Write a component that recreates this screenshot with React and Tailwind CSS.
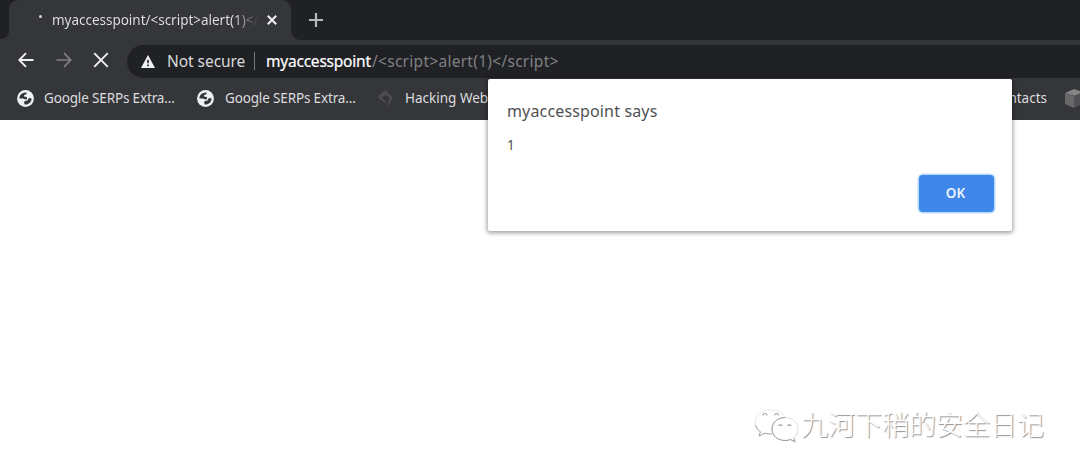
import React from "react";

function GlobeIcon() {
  return (
    <svg className="h-[17px] w-[17px] shrink-0" viewBox="0 0 17 17">
      <circle cx="8.5" cy="8.5" r="8.4" fill="#eef0f1" />
      <path
        d="M9.4 2.4C7 2.200 4.400 3.400 3.100 5.500c-.6.900-.8 2-.7 3h3.300c1.200 0 1.800 1 2.900 1 1 0 1.500-.7 1.500-1.500 0-1-1-1.200-2.200-1.200-1.100 0-1.200-1.400-.3-2 .9-.5 1.500-.2 1.900-.9.300-.5.200-1-.1-1.500Z"
        fill="#35363a"
      />
      <path
        d="M14.600 8.400c-.9.100-1.500-.5-2.300-.3-1.200.3-.9 1.700-1.900 2.300-.9.500-2.100.1-2.800.9-.8.900-.4 1.700.1 3.100 3.700.5 6.900-2.400 6.900-6Z"
        fill="#35363a"
      />
    </svg>
  );
}

function Tab() {
  return (
    <div className="h-10 w-[282px] shrink-0 bg-[#202124]">
      <div className="flex h-10 items-center rounded-t-[9px] bg-[#35363a] pl-[30px]">
        <span className="mb-[8px] h-[3px] w-[3px] rounded-full bg-[#d5d6d8]" />
        <span className="ml-[9px] w-[208px] bg-linear-to-r from-[#e2e3e5] from-88% to-[#35363a] bg-clip-text pl-px text-[13.5px] leading-5 tracking-[-0.02px] whitespace-nowrap text-transparent">
          myaccesspoint/&lt;script&gt;alert(1)&lt;/
        </span>
        <svg className="ml-[8px] h-[10px] w-[10px]" viewBox="0 0 10 10">
          <path d="M.8.800 9.200 9.200M9.200.8.800 9.200" stroke="#f1f2f3" strokeWidth="2" />
        </svg>
      </div>
    </div>
  );
}

function TabStrip() {
  return (
    <div className="flex h-10">
      <div className="h-[39px] w-[9px] shrink-0 rounded-br-[8px] bg-[#202124]" />
      <Tab />
      <div className="flex h-10 flex-1 items-center rounded-bl-[9px] bg-[#202124] pl-[18px]">
        <svg className="h-[14px] w-[14px]" viewBox="0 0 14 14">
          <path d="M7 0v14M0 7h14" stroke="#b9babc" strokeWidth="2.2" />
        </svg>
      </div>
    </div>
  );
}

function Toolbar() {
  return (
    <div className="flex h-10 items-center overflow-hidden pl-[18px]">
      <svg className="h-4 w-4 shrink-0" viewBox="0 0 16 16">
        <path d="M15.500 8H1.500M8 1.200 1.300 8 8 14.800" fill="none" stroke="#eff0f1" strokeWidth="1.900" />
      </svg>
      <svg className="ml-[22px] h-4 w-4 shrink-0" viewBox="0 0 16 16">
        <path d="M.5 8h14M8 1.200 14.700 8 8 14.800" fill="none" stroke="#808184" strokeWidth="1.700" />
      </svg>
      <svg className="ml-[21px] h-4 w-4 shrink-0" viewBox="0 0 16 16">
        <path d="m1.200 1.200 13.600 13.600M14.800 1.200 1.200 14.800" stroke="#eff0f1" strokeWidth="1.900" />
      </svg>
      <div className="mt-[2px] ml-[18px] flex h-[33px] w-[1100px] shrink-0 items-center rounded-full bg-[#202124] pl-[14px] text-[15.5px] leading-6 whitespace-nowrap">
        <svg className="h-[13px] w-[14px] shrink-0" viewBox="0 0 14 13">
          <path d="M7 0 14 13H0Z" fill="#eff0f1" />
          <path d="M6.200 4.800h1.600v3.500H6.200zM6.200 9.500h1.600v1.700H6.200z" fill="#202124" />
        </svg>
        <span className="ml-[12px] w-[79px] tracking-[-0.05px] text-[#d9dadc]">Not secure</span>
        <span className="ml-[8px] h-[18px] w-px bg-[#75767a]" />
        <span className="ml-[11px] w-[106px] tracking-[-0.22px] text-white [-webkit-text-stroke:0.2px_white]">
          myaccesspoint
        </span>
        <span className="tracking-[0.28px] text-[#7f8083]">/&lt;script&gt;alert(1)&lt;/script&gt;</span>
      </div>
    </div>
  );
}

function BookmarksBar() {
  return (
    <div className="flex h-10 items-center overflow-hidden pb-[4px] pl-[17px] text-[13.5px] leading-5 whitespace-nowrap text-[#dcdddf]">
      <GlobeIcon />
      <span className="ml-[10px] w-[132px] shrink-0 tracking-[-0.15px]">Google SERPs Extra...</span>
      <span className="w-[21px] shrink-0" />
      <GlobeIcon />
      <span className="ml-[11px] w-[132px] shrink-0 tracking-[-0.15px]">Google SERPs Extra...</span>
      <svg className="ml-[20px] h-[18px] w-[17px] shrink-0" viewBox="0 0 17 18">
        <path d="M.5 8 8.500.8 11 4l4.800 4.200L13 14.500l-2.300 2.800.8-5.300 1-3L8.500 6 4.500 8.500l5 5-1 1Z" fill="#4c4d50" />
      </svg>
      <span className="ml-[11px] w-[300px] shrink-0">Hacking Web</span>
      <span className="w-[342px] shrink-0 text-right">Contacts</span>
      <svg className="ml-[18px] h-[19px] w-[18px] shrink-0" viewBox="0 0 18 19">
        <path d="M0 4 9 0l9 3-8 4Z" fill="#858585" />
        <path d="m0 4 9 3v12l-9-4Z" fill="#696969" />
        <path d="m9 7 9-4v12l-9 4Z" fill="#505154" />
      </svg>
    </div>
  );
}

function AlertDialog() {
  return (
    <div className="absolute top-[79px] left-[488px] flex h-[152px] w-[524px] flex-col rounded-[2px] bg-white pr-[18px] pl-[19px] text-[#505154] shadow-[0_1px_4px_1px_rgba(0,0,0,0.38)]">
      <div className="mt-[20px] text-base leading-6 tracking-[0.15px]">myaccesspoint says</div>
      <div className="mt-[12px] text-[13.5px] leading-5">1</div>
      <button className="mt-[20px] h-[37px] w-[75px] self-end rounded-[4px] bg-[#3f87e8] pr-[2px] text-[13.5px] font-semibold text-[#edf5ff] shadow-[0_0_0_1.5px_#b5dcff]">
        OK
      </button>
    </div>
  );
}

function Watermark() {
  return (
    <div className="absolute top-[402px] left-[754px] flex h-11 items-center">
      <svg className="mt-[3px] h-[34px] w-[46px] shrink-0" viewBox="0 0 46 34">
        <g fill="#fff" strokeLinejoin="round">
          <path
            d="M17 1C8 1 1 6.500 1 13.500c0 4 2 7 5.500 9.300L5 27l6-2.800c2 .6 4 .8 6 .8 9 0 16-5 16-11.500S26 1 17 1Z"
            stroke="#e2e2e2"
            strokeWidth=".8"
          />
          <path d="M1.500 16c.8 3 2.300 5 5 6.800L5 27l6-2.800c2.500.6 4.500.8 6.500.8" fill="none" stroke="#a5a5a5" />
          <path
            d="M31 8.500c-7.500 0-13 5-13 11.500s5.500 11.500 13 11.500c2 0 4-.3 5.500-1l4.500 2.300-1.200-4c2.800-2.300 4.200-5.300 4.200-8.800 0-6.500-5.500-11.500-13-11.500Z"
            stroke="#d6d6d6"
            strokeWidth=".8"
          />
          <path
            d="M31 8.500c-7.500 0-13 5-13 11.500s5.500 11.500 13 11.500c2 0 4-.3 5.500-1l4.500 2.300-1.200-3.500"
            fill="none"
            stroke="#9c9c9c"
          />
        </g>
        <g fill="none" stroke="#a0a0a0" strokeWidth="1.1">
          <path d="M9 6.500a2 2 0 0 1 4 0M20.500 6.500a2 2 0 0 1 4 0M24.500 17a2 2 0 0 1 3.600 0M33.500 17a2 2 0 0 1 3.600 0" />
        </g>
      </svg>
      <span className="ml-[1px] font-['Noto_Sans_CJK_SC',sans-serif] text-[27px] leading-[40px] font-light whitespace-nowrap text-white [text-shadow:1px_1px_1px_rgba(0,0,0,0.45)]">
        九河下稍的安全日记
      </span>
    </div>
  );
}

export default function App() {
  return (
    <div className="relative h-[472px] w-[1080px] overflow-hidden bg-white font-['Noto_Sans','Open_Sans',sans-serif]">
      <header className="h-[120px] bg-[#35363a]">
        <TabStrip />
        <Toolbar />
        <BookmarksBar />
      </header>
      <AlertDialog />
      <Watermark />
    </div>
  );
}
